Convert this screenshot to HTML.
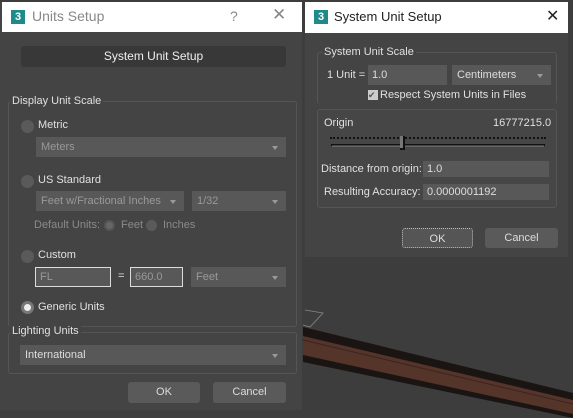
<!DOCTYPE html>
<html><head><style>
*{box-sizing:border-box;margin:0;padding:0}
body{width:573px;height:418px;background:#3d3d3d;position:relative;overflow:hidden;font-family:"Liberation Sans",sans-serif;font-size:11px;color:#e0e0e0}
.a{position:absolute;white-space:nowrap}
.dlg{background:#444;}
.tb{background:#fff;color:#222;font-size:14px}
.icon{width:14px;height:14px;background:#1f8a8a;color:#fff;font-weight:bold;font-size:11px;text-align:center;line-height:14px}
.btn{background:#5a5a5a;border-radius:3px;text-align:center;color:#ddd}
.inp{background:#585858;color:#999;padding-left:4px}
.dd{background:#585858;color:#999;padding-left:5px}
.dd:after{content:"";position:absolute;right:8px;top:45%;border:3px solid transparent;border-top:4px solid #999;border-bottom:none}
.grp{border:1px solid #555;border-radius:3px}
.rad{width:13px;height:13px;border-radius:50%;background:#5a5a5a}
.lbl{background:#444;padding:0 2px}
.dim{color:#8a8a8a}
</style></head><body>
<svg class="a" style="left:0;top:0" width="573" height="418">
<polygon points="303,327 573,393 573,418 303,362" fill="#1a1412"/>
<polygon points="303,336 573,400 573,414 303,355" fill="#55342a"/>
<line x1="303" y1="340" x2="573" y2="404" stroke="#3a2520" stroke-width="1"/>
<polyline points="305,310 323,313 310,327 303,325" fill="none" stroke="#888" stroke-width="0.8"/>
</svg>
<div class="a dlg" style="left:0;top:2px;width:302px;height:408px"></div>
<div class="a tb" style="left:2px;top:2px;width:300px;height:30px"></div>
<div class="a icon" style="left:11px;top:10px">3</div>
<div class="a" style="left:32px;top:8px;font-size:14px;color:#888">Units Setup</div>
<div class="a" style="left:230px;top:8px;font-size:14px;color:#888">?</div>
<div class="a" style="left:272px;top:5px;font-size:17px;color:#888">✕</div>
<div class="a" style="left:21px;top:46px;width:265px;height:21px;background:#383838;border-radius:3px;text-align:center;line-height:21px;color:#eee;font-size:12px">System Unit Setup</div>
<div class="a grp" style="left:8px;top:101px;width:289px;height:226px"></div>
<div class="a lbl" style="left:10px;top:95px">Display Unit Scale</div>
<div class="a rad" style="left:21px;top:120px"></div>
<div class="a" style="left:38px;top:119px">Metric</div>
<div class="a dd" style="left:36px;top:137px;width:250px;height:20px;line-height:20px">Meters</div>
<div class="a rad" style="left:21px;top:175px"></div>
<div class="a" style="left:38px;top:174px">US Standard</div>
<div class="a dd" style="left:36px;top:191px;width:148px;height:20px;line-height:20px">Feet w/Fractional Inches</div>
<div class="a dd" style="left:192px;top:191px;width:94px;height:20px;line-height:20px">1/32</div>
<div class="a dim" style="left:34px;top:219px">Default Units:</div>
<div class="a rad" style="left:104px;top:220px;width:11px;height:11px;background:#666;border:2px solid #555"></div>
<div class="a dim" style="left:121px;top:219px">Feet</div>
<div class="a rad" style="left:146px;top:220px;width:11px;height:11px"></div>
<div class="a dim" style="left:163px;top:219px">Inches</div>
<div class="a rad" style="left:21px;top:250px"></div>
<div class="a" style="left:38px;top:249px">Custom</div>
<div class="a inp" style="left:35px;top:267px;width:76px;height:20px;border:1px solid #ddd;line-height:18px">FL</div>
<div class="a" style="left:118px;top:270px">=</div>
<div class="a inp" style="left:130px;top:267px;width:53px;height:20px;border:1px solid #ddd;line-height:18px">660.0</div>
<div class="a dd" style="left:191px;top:267px;width:95px;height:20px;line-height:20px">Feet</div>
<div class="a rad" style="left:21px;top:301px;background:#eee;border:3px solid #777"></div>
<div class="a" style="left:38px;top:301px">Generic Units</div>
<div class="a grp" style="left:8px;top:332px;width:289px;height:42px"></div>
<div class="a lbl" style="left:10px;top:325px">Lighting Units</div>
<div class="a dd" style="left:20px;top:345px;width:266px;height:20px;line-height:20px;color:#ddd">International</div>
<div class="a btn" style="left:128px;top:382px;width:72px;height:21px;line-height:21px">OK</div>
<div class="a btn" style="left:213px;top:382px;width:73px;height:21px;line-height:21px">Cancel</div>
<div class="a dlg" style="left:305px;top:2px;width:263px;height:255px"></div>
<div class="a tb" style="left:305px;top:2px;width:263px;height:31px"></div>
<div class="a icon" style="left:314px;top:10px">3</div>
<div class="a" style="left:334px;top:9px;font-size:13px;color:#222">System Unit Setup</div>
<div class="a" style="left:546px;top:6px;font-size:16px;color:#222">✕</div>
<div class="a grp" style="left:317px;top:52px;width:240px;height:52px;border-bottom:none"></div>
<div class="a lbl" style="left:322px;top:46px">System Unit Scale</div>
<div class="a" style="left:327px;top:69px">1 Unit =</div>
<div class="a inp" style="left:368px;top:65px;width:79px;height:20px;line-height:20px;color:#ddd">1.0</div>
<div class="a dd" style="left:452px;top:65px;width:99px;height:20px;line-height:20px;color:#ddd">Centimeters</div>
<div class="a" style="left:368px;top:90px;width:10px;height:10px;background:#ccc;color:#555;font-size:9px;line-height:10px">✔</div>
<div class="a" style="left:380px;top:89px">Respect System Units in Files</div>
<div class="a grp" style="left:317px;top:109px;width:240px;height:99px;background:#464646"></div>
<div class="a" style="left:324px;top:117px">Origin</div>
<div class="a" style="left:493px;top:117px">16777215.0</div>
<div class="a" style="left:330px;top:137px;width:216px;border-top:2px dotted #111"></div>
<div class="a" style="left:331px;top:144px;width:214px;height:3px;border:1px solid #111;border-bottom-color:#666"></div>
<div class="a" style="left:400px;top:136px;width:5px;height:14px;background:#777;border-right:2px solid #111;border-bottom:2px solid #111"></div>
<div class="a" style="left:321px;top:163px">Distance from origin:</div>
<div class="a inp" style="left:423px;top:161px;width:126px;height:16px;line-height:16px;color:#ddd">1.0</div>
<div class="a" style="left:324px;top:186px">Resulting Accuracy:</div>
<div class="a inp" style="left:423px;top:184px;width:126px;height:16px;line-height:16px;color:#ddd">0.0000001192</div>
<div class="a btn" style="left:402px;top:228px;width:71px;height:20px;line-height:20px;border:1px dotted #bbb;background:#555">OK</div>
<div class="a btn" style="left:485px;top:228px;width:73px;height:20px;line-height:20px">Cancel</div>
</body></html>
